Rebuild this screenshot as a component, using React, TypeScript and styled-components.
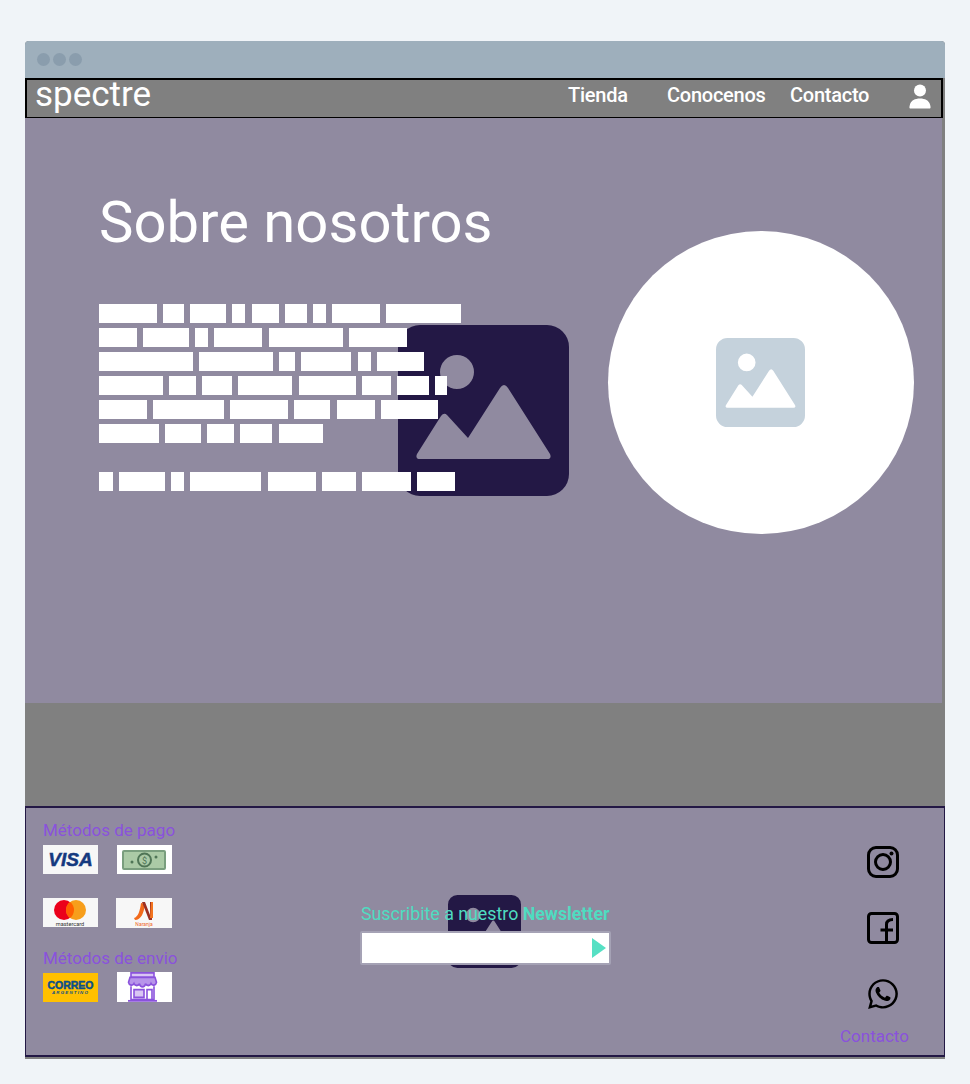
import * as React from "react";
import styled, { createGlobalStyle } from "styled-components";
import { FaWhatsapp } from "react-icons/fa";

const GlobalStyle = createGlobalStyle`
  html, body {
    margin: 0;
    padding: 0;
    background: #f0f4f8;
  }
  * {
    box-sizing: border-box;
  }
`;

const Page = styled.div`
  padding: 41px 25px 25px;
  font-family: Roboto, "Liberation Sans", sans-serif;
`;

const Frame = styled.div`
  width: 920px;
  height: 1018px;
  background: #808080;
  border-radius: 4px 4px 0 0;
  overflow: hidden;
`;

const TitleBar = styled.div`
  height: 37px;
  background: #9eafbc;
  display: flex;
  align-items: center;
  gap: 3px;
  padding: 0 0 0 12px;
`;

const Dot = styled.span`
  width: 13px;
  height: 13px;
  border-radius: 50%;
  background: #8a9dad;
`;

const Nav = styled.nav`
  width: 918px;
  height: 40px;
  border: 2px solid #000;
  border-bottom-width: 1px;
  background: #808080;
  display: flex;
  align-items: center;
  padding-left: 8px;
  color: #fff;
`;

const Logo = styled.div`
  font-size: 35px;
  font-weight: 400;
  line-height: 36px;
  margin-top: -7px;
  width: 533px;
`;

const NavLink = styled.a<{ $w: number }>`
  width: ${(p) => p.$w}px;
  font-size: 20px;
  font-weight: 500;
  line-height: 30px;
  margin-top: -8px;
  letter-spacing: -0.25px;
`;

const Hero = styled.section`
  width: 917px;
  height: 585px;
  background: #908aa0;
  display: flex;
  padding-left: 74px;
`;

const HeroCopy = styled.div`
  position: relative;
  width: 509px;
`;

const HeroIcon = styled.div`
  position: absolute;
  left: 299px;
  top: 207px;
  display: flex;
`;

const Heading = styled.h1`
  position: relative;
  margin: 0;
  padding-top: 68px;
  height: 186px;
  font-size: 58px;
  line-height: 72px;
  font-weight: 400;
  color: #fff;
`;

const Redacted = styled.div`
  position: relative;
  display: flex;
  flex-direction: column;
  gap: 5px;
`;

const WordRow = styled.div<{ $spaced?: boolean }>`
  display: flex;
  gap: 6.15px;
  height: 19px;
  margin-top: ${(p) => (p.$spaced ? "24px" : "0")};
`;

const Word = styled.span<{ $w: number }>`
  width: ${(p) => p.$w}px;
  height: 19px;
  background: #fff;
`;

const PhotoCircle = styled.div`
  width: 306px;
  height: 303px;
  margin-top: 113px;
  padding-right: 2px;
  border-radius: 50%;
  background: #fff;
  display: flex;
  align-items: center;
  justify-content: center;
`;

const Band = styled.div`
  height: 103px;
`;

const Footer = styled.footer`
  height: 251px;
  background: #908aa0;
  border: 1px solid #231845;
  border-top-width: 2px;
  border-bottom-width: 2px;
  display: flex;
  padding-left: 17px;
`;

const PayColumn = styled.div`
  width: 318px;
  padding-top: 12px;
`;

const Label = styled.div<{ $top?: number }>`
  color: #8a52dc;
  font-size: 17px;
  font-weight: 400;
  line-height: 20px;
  margin-top: ${(p) => p.$top ?? 0}px;
`;

const TileRow = styled.div<{ $top: number; $gap: number }>`
  display: flex;
  align-items: flex-start;
  gap: ${(p) => p.$gap}px;
  margin-top: ${(p) => p.$top}px;
`;

const Tile = styled.div<{ $bg: string; $w?: number; $h?: number; $drop?: number }>`
  width: ${(p) => p.$w ?? 55}px;
  height: ${(p) => p.$h ?? 29}px;
  margin-top: ${(p) => p.$drop ?? 0}px;
  background: ${(p) => p.$bg};
  display: flex;
`;

const NewsColumn = styled.div`
  position: relative;
  width: 250px;
  padding-top: 96px;
`;

const NewsIcon = styled.div`
  position: absolute;
  left: 87px;
  top: 87px;
  display: flex;
`;

const NewsTitle = styled.div`
  position: relative;
  color: #4fdcc0;
  font-size: 17.8px;
  font-weight: 400;
  line-height: 20px;
  white-space: nowrap;
  b {
    font-weight: 700;
  }
`;

const NewsInput = styled.div`
  position: relative;
  width: 251px;
  height: 34px;
  margin: 7px 0 0 -1px;
  background: #fff;
  border: 2px solid #a5a2b5;
  border-radius: 2px;
  display: flex;
  align-items: center;
  justify-content: flex-end;
  padding-right: 3px;
`;

const Triangle = styled.span`
  width: 0;
  height: 0;
  border-left: 14px solid #56e0c4;
  border-top: 10.5px solid transparent;
  border-bottom: 10.5px solid transparent;
`;

const SocialColumn = styled.div`
  margin-left: 229px;
  padding-top: 38px;
  display: flex;
  flex-direction: column;
`;

const SocialLink = styled.a<{ $top?: number; $left?: number }>`
  display: flex;
  margin: ${(p) => p.$top ?? 0}px 0 0 ${(p) => p.$left ?? 27}px;
  color: #000;
`;

const ImageIcon = ({ size, color }: { size: number; color: string }) => (
  <svg width={size} height={size} viewBox="0 0 171 171">
    <path
      fill={color}
      fillRule="evenodd"
      d="M22 0H149A22 22 0 0 1 171 22V149A22 22 0 0 1 149 171H22A22 22 0 0 1 0 149V22A22 22 0 0 1 22 0ZM59 30A17 17 0 1 0 59 64A17 17 0 1 0 59 30ZM106 60Q104 60 102 63L70 113L49 90Q46 87 43 91L19 129Q17 134 22 134H149Q154 134 152 129L110 63Q108 60 106 60Z"
    />
  </svg>
);

const UserIcon = () => (
  <svg width="22" height="25" viewBox="0 0 22 25" fill="#fff" style={{ marginTop: -4 }}>
    <circle cx="11" cy="6.5" r="6" />
    <path d="M1 24.5C0 24.5 0.5 22 1 20.5C2 16.5 6 14.5 11 14.5C16 14.5 20 16.5 21 20.5C21.5 22 22 24.5 21 24.5Z" />
  </svg>
);

const InstagramIcon = () => (
  <svg width="32" height="32" viewBox="0 0 32 32" fill="none" stroke="#000" strokeWidth="3">
    <rect x="1.5" y="1.5" width="29" height="29" rx="7.5" />
    <circle cx="16" cy="16" r="7.5" />
    <circle cx="24.5" cy="7.5" r="2" fill="#000" stroke="none" />
  </svg>
);

const FacebookIcon = () => (
  <svg width="32" height="32" viewBox="0 0 32 32" fill="none" stroke="#000" strokeWidth="3">
    <rect x="1.5" y="1.5" width="29" height="29" rx="3" />
    <path d="M19.5 31V12.5C19.5 9 21.5 7.5 26 7.5M13.5 18H26" />
  </svg>
);

const VisaLogo = () => (
  <svg width="55" height="29" viewBox="0 0 55 29">
    <text
      x="27.5"
      y="20.5"
      textAnchor="middle"
      fontFamily="Liberation Sans, sans-serif"
      fontWeight="700"
      fontStyle="italic"
      fontSize="19"
      fill="#15397f"
      stroke="#15397f"
      strokeWidth="0.5"
    >
      VISA
    </text>
  </svg>
);

const CashLogo = () => (
  <svg width="55" height="29" viewBox="0 0 55 29">
    <rect x="6" y="6" width="42" height="18" rx="1" fill="#abcaa6" stroke="#7a9e7e" strokeWidth="2" />
    <circle cx="27.5" cy="15" r="6.5" fill="#abcaa6" stroke="#4f7556" strokeWidth="2" />
    <text x="27.5" y="18.5" textAnchor="middle" fontFamily="Roboto, sans-serif" fontSize="9" fill="#4f7556">
      $
    </text>
    <circle cx="15" cy="17" r="1.5" fill="#4f7556" />
    <circle cx="39" cy="12" r="1.5" fill="#4f7556" />
  </svg>
);

const MastercardLogo = () => (
  <svg width="55" height="29" viewBox="0 0 55 29">
    <circle cx="21" cy="12" r="10" fill="#eb001b" />
    <circle cx="33" cy="12" r="10" fill="#f79e1b" />
    <path d="M27 4A10 10 0 0 1 27 20A10 10 0 0 1 27 4Z" fill="#ff5f00" />
    <text x="27" y="27.5" textAnchor="middle" fontFamily="Roboto, sans-serif" fontSize="5.6" fill="#333">
      mastercard
    </text>
  </svg>
);

const NaranjaLogo = () => (
  <svg width="56" height="30" viewBox="0 0 56 30">
    <path d="M18 20C22 19 24 13 25 5L29 6C28 15 25 22 19 22Z" fill="#f26a1b" />
    <path d="M26 4H29L34 17V4H36V22H33Z" fill="#9c2f22" />
    <path d="M35 4H37V20H34Z" fill="#f2741f" />
    <text x="28" y="28" textAnchor="middle" fontFamily="Roboto, sans-serif" fontSize="5" fill="#f0682a">
      Naranja
    </text>
  </svg>
);

const CorreoLogo = () => (
  <svg width="55" height="29" viewBox="0 0 55 29">
    <text
      x="27.5"
      y="16"
      textAnchor="middle"
      fontFamily="Liberation Sans, sans-serif"
      fontWeight="700"
      fontSize="10.5"
      fill="#0b4f8a"
      stroke="#0b4f8a"
      strokeWidth="0.5"
    >
      CORREO
    </text>
    <text
      x="27.5"
      y="21"
      textAnchor="middle"
      fontFamily="Liberation Sans, sans-serif"
      fontWeight="700"
      fontStyle="italic"
      fontSize="4.4"
      letterSpacing="1.2"
      fill="#0b4f8a"
    >
      ARGENTINO
    </text>
  </svg>
);

const StoreLogo = () => (
  <svg width="55" height="30" viewBox="0 0 55 30">
    <g stroke="#8a52dc" strokeWidth="1.6" fill="none" transform="translate(-2 -2.5) scale(1 1.12)">
      <path d="M16 3H39V7H16Z" fill="#d9c6f3" />
      <path d="M15 7H40L41.5 11.5A3 3 0 0 1 36 12.5A3 3 0 0 1 30.5 12.5A3 3 0 0 1 24.5 12.5A3 3 0 0 1 19 12.5A3 3 0 0 1 13.5 11.5Z" fill="#b794ea" />
      <path d="M16 15V27H39V15" />
      <path d="M19 18H29V25H19Z" fill="#d9c6f3" />
      <path d="M32 27V18H37V27" />
      <path d="M13 28H42" />
    </g>
  </svg>
);

const heroCopy = [
  [58, 21, 36, 13, 27, 22, 13, 48, 75],
  [38, 46, 13, 48, 74, 58],
  [94, 74, 16, 50, 13, 47],
  [64, 27, 30, 54, 57, 29, 32, 12],
  [48, 71, 58, 36, 38, 57],
  [60, 36, 27, 32, 44],
];

const heroLastLine = [14, 46, 13, 71, 48, 34, 49, 38];

const App = (): React.ReactElement => {
  return (
    <Page>
      <GlobalStyle />
      <Frame>
        <TitleBar>
          <Dot />
          <Dot />
          <Dot />
        </TitleBar>
        <Nav>
          <Logo>spectre</Logo>
          <NavLink $w={99}>Tienda</NavLink>
          <NavLink $w={123}>Conocenos</NavLink>
          <NavLink $w={119}>Contacto</NavLink>
          <UserIcon />
        </Nav>
        <Hero>
          <HeroCopy>
            <HeroIcon>
              <ImageIcon size={171} color="#231845" />
            </HeroIcon>
            <Heading>Sobre nosotros</Heading>
            <Redacted>
              {heroCopy.map((row, i) => (
                <WordRow key={i}>
                  {row.map((w, j) => (
                    <Word key={j} $w={w} />
                  ))}
                </WordRow>
              ))}
              <WordRow $spaced>
                {heroLastLine.map((w, j) => (
                  <Word key={j} $w={w} />
                ))}
              </WordRow>
            </Redacted>
          </HeroCopy>
          <PhotoCircle>
            <ImageIcon size={89} color="#c5d2dc" />
          </PhotoCircle>
        </Hero>
        <Band />
        <Footer>
          <PayColumn>
            <Label>Métodos de pago</Label>
            <TileRow $top={5} $gap={19}>
              <Tile $bg="#f7f7f7">
                <VisaLogo />
              </Tile>
              <Tile $bg="#fff">
                <CashLogo />
              </Tile>
            </TileRow>
            <TileRow $top={24} $gap={18}>
              <Tile $bg="#f7f7f7">
                <MastercardLogo />
              </Tile>
              <Tile $bg="#f7f7f7" $w={56} $h={30}>
                <NaranjaLogo />
              </Tile>
            </TileRow>
            <Label $top={20}>Métodos de envio</Label>
            <TileRow $top={4} $gap={19}>
              <Tile $bg="#ffc000" $drop={1}>
                <CorreoLogo />
              </Tile>
              <Tile $bg="#fff" $h={30}>
                <StoreLogo />
              </Tile>
            </TileRow>
          </PayColumn>
          <NewsColumn>
            <NewsIcon>
              <ImageIcon size={73} color="#231845" />
            </NewsIcon>
            <NewsTitle>
              Suscribite a nuestro <b>Newsletter</b>
            </NewsTitle>
            <NewsInput>
              <Triangle />
            </NewsInput>
          </NewsColumn>
          <SocialColumn>
            <SocialLink>
              <InstagramIcon />
            </SocialLink>
            <SocialLink $top={34}>
              <FacebookIcon />
            </SocialLink>
            <SocialLink $top={33} $left={26}>
              <FaWhatsapp size={34} />
            </SocialLink>
            <Label $top={15}>Contacto</Label>
          </SocialColumn>
        </Footer>
      </Frame>
    </Page>
  );
};

export default App;
